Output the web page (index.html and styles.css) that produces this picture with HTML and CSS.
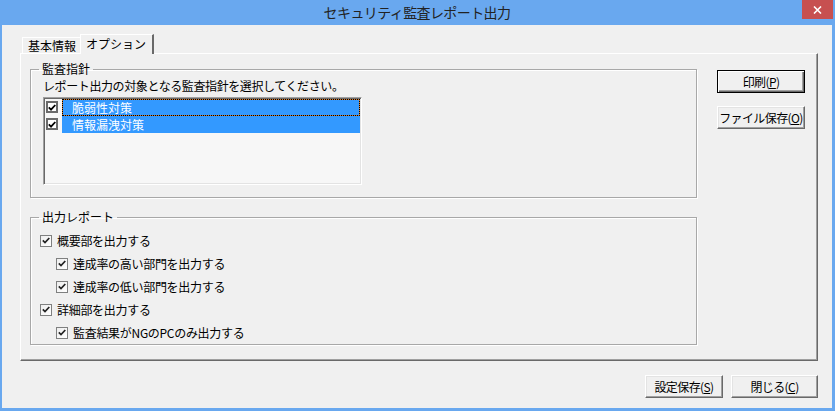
FILE: index.html
```html
<!DOCTYPE html>
<html>
<head>
    <meta charset="UTF-8">
    <title>セキュリティ監査レポート出力</title>
    <link rel="stylesheet" href="styles.css">
</head>
<body>

<div class="window">
    <div class="titlebar">
        <span class="title">セキュリティ監査レポート出力</span>
        <span class="close">
            <svg width="9" height="8" viewBox="0 0 9 8"><path d="M1 0.5 L8 7.5 M8 0.5 L1 7.5" stroke="#fff" stroke-width="1.6"/></svg>
        </span>
    </div>

    <div class="client">
        <div class="tabs">
            <div class="tab">基本情報</div>
            <div class="tab active">オプション</div>
        </div>

        <div class="panel">
            <div class="groups">
                <fieldset class="group audit">
                    <legend>監査指針</legend>
                    <div class="hint">レポート出力の対象となる監査指針を選択してください。</div>
                    <div class="listbox">
                        <div class="item">
                            <span class="lcb"><svg width="8" height="7" viewBox="0 0 8 7"><path d="M0.8 3.4 L3 5.6 L7.3 1" fill="none" stroke="#000" stroke-width="1.8"/></svg></span>
                            <span class="item-label focus">脆弱性対策</span>
                        </div>
                        <div class="item">
                            <span class="lcb"><svg width="8" height="7" viewBox="0 0 8 7"><path d="M0.8 3.4 L3 5.6 L7.3 1" fill="none" stroke="#000" stroke-width="1.8"/></svg></span>
                            <span class="item-label">情報漏洩対策</span>
                        </div>
                    </div>
                </fieldset>

                <fieldset class="group report">
                    <legend>出力レポート</legend>
                    <div class="row">
                        <span class="cb"><svg width="8" height="7" viewBox="0 0 8 7"><path d="M0.8 3.4 L3 5.6 L7.3 1" fill="none" stroke="#222" stroke-width="1.7"/></svg></span>
                        概要部を出力する
                    </div>
                    <div class="row sub">
                        <span class="cb"><svg width="8" height="7" viewBox="0 0 8 7"><path d="M0.8 3.4 L3 5.6 L7.3 1" fill="none" stroke="#222" stroke-width="1.7"/></svg></span>
                        達成率の高い部門を出力する
                    </div>
                    <div class="row sub">
                        <span class="cb"><svg width="8" height="7" viewBox="0 0 8 7"><path d="M0.8 3.4 L3 5.6 L7.3 1" fill="none" stroke="#222" stroke-width="1.7"/></svg></span>
                        達成率の低い部門を出力する
                    </div>
                    <div class="row">
                        <span class="cb"><svg width="8" height="7" viewBox="0 0 8 7"><path d="M0.8 3.4 L3 5.6 L7.3 1" fill="none" stroke="#222" stroke-width="1.7"/></svg></span>
                        詳細部を出力する
                    </div>
                    <div class="row sub">
                        <span class="cb"><svg width="8" height="7" viewBox="0 0 8 7"><path d="M0.8 3.4 L3 5.6 L7.3 1" fill="none" stroke="#222" stroke-width="1.7"/></svg></span>
                        監査結果がNGのPCのみ出力する
                    </div>
                </fieldset>
            </div>

            <div class="side-buttons">
                <button class="btn default">印刷(<u>P</u>)</button>
                <button class="btn">ファイル保存(<u>O</u>)</button>
            </div>
        </div>

        <div class="footer">
            <button class="btn save">設定保存(<u>S</u>)</button>
            <button class="btn closebtn">閉じる(<u>C</u>)</button>
        </div>
    </div>
</div>

</body>
</html>
```

FILE: styles.css
```css
html, body {
    margin: 0;
    padding: 0;
    overflow: hidden;
}

body {
    font-family: "Noto Sans CJK JP", "Liberation Sans", sans-serif;
    font-size: 12px;
    color: #000;
    background: #69a8ef;
}

.window {
    width: 835px;
    height: 411px;
    box-sizing: border-box;
    background: #69a8ef;
    padding: 0 3px 3px 2px;
    display: flex;
    flex-direction: column;
}

/* title bar */
.titlebar {
    height: 25px;
    display: grid;
    grid-template-columns: 1fr auto 1fr;
    align-items: start;
}

.title {
    grid-column: 2;
    font-size: 14px;
    line-height: 25px;
    color: #222;
    letter-spacing: -0.6px;
}

.close {
    grid-column: 3;
    justify-self: end;
    margin-right: -1px;
    width: 31px;
    height: 19px;
    background: #c75050;
    display: flex;
    align-items: center;
    justify-content: center;
}

/* client area */
.client {
    flex: 1;
    background: #f0f0f0;
    padding: 9px 14px 10px 18px;
    display: flex;
    flex-direction: column;
}

.tabs {
    display: flex;
    align-items: flex-end;
    height: 19px;
    padding-left: 2px;
}

.tab {
    height: 16px;
    line-height: 16px;
    padding: 0 4px 0 5px;
    box-sizing: border-box;
    border-left: 1px solid #fff;
    border-top: 1px solid #fff;
}

.tab.active {
    position: relative;
    z-index: 1;
    height: 20px;
    line-height: 18px;
    margin-bottom: -1px;
    padding: 0 6px 0 5px;
    background: #f0f0f0;
    border-right: 2px solid #696969;
}

.panel {
    border: 1px solid;
    border-color: #fff #696969 #696969 #fff;
    box-shadow: inset -1px -1px 0 #a0a0a0;
    padding: 8px 0 15px 9px;
    display: flex;
    gap: 20px;
}

.groups {
    width: 667px;
}

.group {
    margin: 0;
    border: 1px solid #a8a8a8;
    box-shadow: inset 1px 1px 0 #fff, 1px 1px 0 #fff;
    min-width: 0;
}

.group legend {
    line-height: 14px;
    padding: 0 3px;
}

.audit {
    padding: 0 12px 12px 12px;
}

.audit legend {
    margin-left: -4px;
}

.hint {
    margin-top: 2px;
    line-height: 15px;
    letter-spacing: -0.4px;
}

.listbox {
    margin-top: 4px;
    width: 319px;
    height: 88px;
    box-sizing: border-box;
    border: 1px solid;
    border-color: #a0a0a0 #fff #fff #a0a0a0;
    box-shadow: inset 1px 1px 0 #696969, inset -1px -1px 0 #e3e3e3;
    background: #f7f7f7;
    padding: 1px 1px 0 1px;
}

.item {
    display: flex;
    height: 17px;
}

.lcb {
    width: 12px;
    height: 12px;
    box-sizing: border-box;
    margin: 2px 4px 0 1px;
    border: 2px solid #6a6a6a;
    background: #fff;
    display: flex;
    align-items: center;
    justify-content: center;
}

.item-label {
    flex: 1;
    background: #3399ff;
    color: #fff;
    line-height: 17px;
    padding-left: 10px;
}

.item-label.focus {
    border: 1px dotted #000;
    background: linear-gradient(#3399ff, #3399ff) padding-box, #d5782a;
    line-height: 15px;
    padding-left: 9px;
}

.report {
    margin-top: 12px;
    padding: 5px 9px 0 9px;
}

.report legend {
    margin-left: -1px;
}

.row {
    height: 23px;
    display: flex;
    align-items: center;
    gap: 5px;
    letter-spacing: -0.3px;
}

.row.sub {
    padding-left: 16px;
}

.cb {
    width: 12px;
    height: 12px;
    box-sizing: border-box;
    border: 1px solid #7f8080;
    background: linear-gradient(135deg, #eeeeee, #fff);
    display: flex;
    align-items: center;
    justify-content: center;
}

/* buttons */
.side-buttons {
    margin-top: 8px;
    display: flex;
    flex-direction: column;
    gap: 13px;
}

.btn {
    font-family: inherit;
    font-size: 12px;
    color: #000;
    width: 88px;
    height: 23px;
    padding: 0;
    white-space: nowrap;
    letter-spacing: -0.6px;
    background: #f0f0f0;
    border: 1px solid;
    border-color: #fff #696969 #696969 #fff;
    box-shadow: inset -1px -1px 0 #a0a0a0, inset 1px 1px 0 #e3e3e3;
}

.btn.default {
    border: 1px solid #000;
    box-shadow: inset 1px 1px 0 #fff, inset -1px -1px 0 #696969, inset -2px -2px 0 #a0a0a0;
}

.footer {
    margin-top: auto;
    display: flex;
    justify-content: flex-end;
    gap: 8px;
}

.btn.save {
    width: 78px;
}

.btn.closebtn {
    width: 87px;
}
```
